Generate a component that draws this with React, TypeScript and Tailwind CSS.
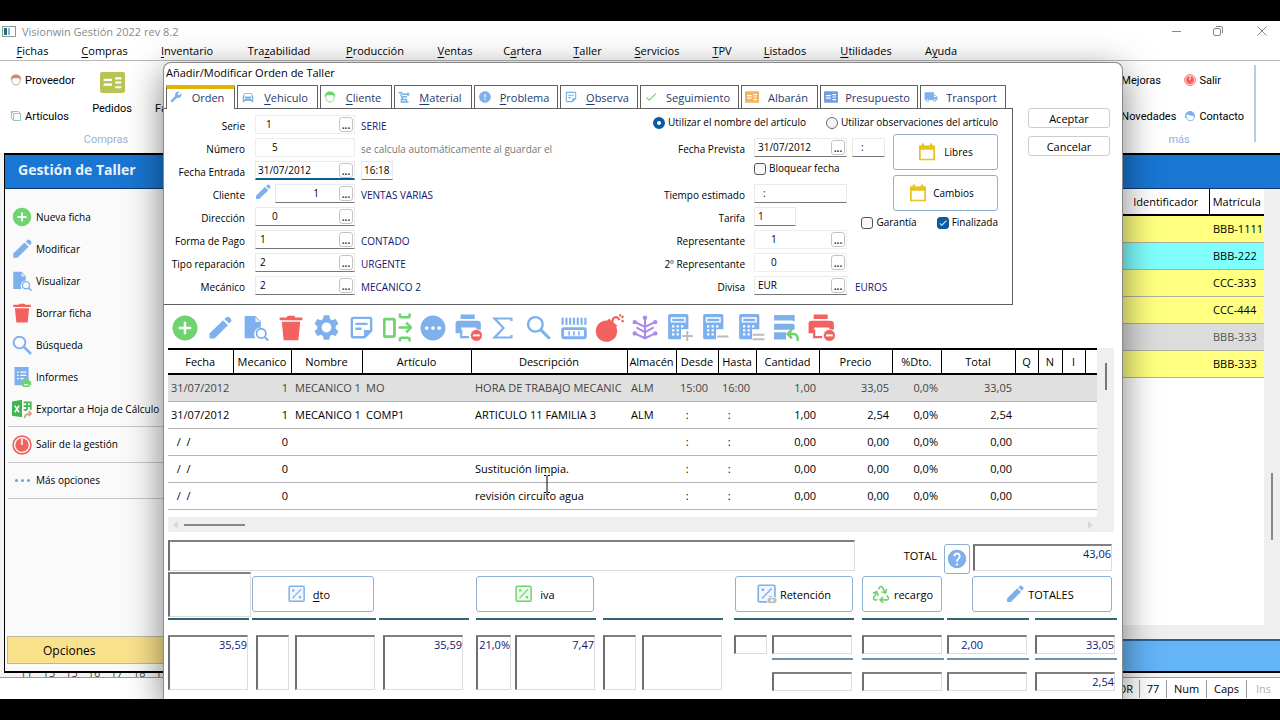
import type { ReactNode } from "react";
import clsx from "clsx";
import { Recycle } from "lucide-react";
import {
  MdAddCircle,
  MdCheck,
  MdDirectionsCar,
  MdError,
  MdHelp,
  MdLocalShipping,
  MdOutlineStickyNote2,
  MdPending,
  MdBuild,
} from "react-icons/md";

const BLUE = "#7fb0ee";
const GREEN = "#6fd36f";
const RED = "#f4625f";

/* ---------- icons ---------- */

interface IconProps {
  className?: string;
  color?: string;
}

function Svg({ className, children }: { className?: string; children: ReactNode }) {
  return (
    <svg viewBox="0 0 24 24" fill="none" className={clsx("shrink-0", className)} aria-hidden="true">
      {children}
    </svg>
  );
}

const Pencil = ({ className, color = BLUE }: IconProps) => (
  <Svg className={className}>
    <path fill={color} d="M1.500 17.500 15 4.300l5 5L6.500 22.500H1.500z" />
    <path fill={color} d="m16.500 3 1.600-1.500a2.600 2.600 0 0 1 3.500 0l1 1a2.600 2.600 0 0 1 0 3.500L21 7.600z" />
  </Svg>
);

const DocSearch = ({ className }: IconProps) => (
  <Svg className={className}>
    <path fill={BLUE} d="M1.500 1h10l5 5v5.500a6.300 6.300 0 0 0-5 10L1.500 21.500z" />
    <path fill="#fff" d="M11.500 2v4.500H16z" opacity=".8" />
    <circle cx="16.800" cy="17" r="4.300" stroke={BLUE} strokeWidth="1.700" />
    <path stroke={BLUE} strokeWidth="2" d="m20 20.300 3.300 3.300" />
  </Svg>
);

const Trash = ({ className }: IconProps) => (
  <Svg className={className}>
    <path fill={RED} d="M1.500 2.200h6.500l1-1.400h6l1 1.400h6.500v2.600h-21z" />
    <path fill={RED} d="M3.500 6.300h17l-1.700 17H5.200z" />
  </Svg>
);

const Lens = ({ className }: IconProps) => (
  <Svg className={className}>
    <circle cx="9" cy="9" r="7" stroke={BLUE} strokeWidth="2.300" />
    <path stroke={BLUE} strokeWidth="3" d="m14.300 14.300 8.500 8.500" />
  </Svg>
);

const Gear = ({ className }: IconProps) => (
  <Svg className={className}>
    <circle cx="12" cy="12" r="6.800" stroke={BLUE} strokeWidth="4.200" />
    {[0, 60, 120, 180, 240, 300].map((a) => (
      <path key={a} fill={BLUE} d="M8.500 4.500 9.300.300h5.400l.8 4.200z" transform={`rotate(${a} 12 12)`} />
    ))}
  </Svg>
);

const Power = ({ className }: IconProps) => (
  <Svg className={className}>
    <circle cx="12" cy="12" r="10.700" stroke={RED} strokeWidth="2" />
    <circle cx="12" cy="12" r="8" fill={RED} />
    <path stroke="#fff" strokeWidth="1.800" d="M12 4v8" />
  </Svg>
);

const Report = ({ className }: IconProps) => (
  <Svg className={className}>
    <path fill={BLUE} d="M3 0h17v17h-6v5H3z" />
    <path stroke="#fff" strokeWidth="1.500" d="M6 6h2m2 0h7M6 10h2m2 0h7M6 14h2m2 0h4" />
    <path fill={GREEN} d="M13 15h8v2h2v5h-2v2h-8v-2h-2v-5h2z" />
    <path fill="#fff" d="M14.500 20.500h5v1.500h-5z" />
  </Svg>
);

const Excel = ({ className }: IconProps) => (
  <Svg className={className}>
    <path fill="#3fb54f" d="M0 3 12 1v21L0 20z" />
    <path stroke="#fff" strokeWidth="1.900" d="m3.300 8 5.200 8m0-8-5.200 8" />
    <path stroke="#3fb54f" strokeWidth="2" d="M14 4h8.500v9M14 8.500h8M18 4v9M14 13h4" />
    <path stroke="#d9a08c" strokeWidth="1.900" d="M15 23c0-4 3-5.500 8-5.500M20 14.500l3 3-3 3" />
  </Svg>
);

const Transfer = ({ className }: IconProps) => (
  <Svg className={className}>
    <rect x="1" y="5" width="8.500" height="14.500" rx="1" stroke={GREEN} strokeWidth="2.300" />
    <path stroke={GREEN} strokeWidth="2.100" d="M13 12h10m-3.800-4 4 4-4 4M14 .500v1.700c0 1 .5 1.300 1.500 1.300h5c1 0 1.500-.3 1.500-1.300V.500M14 23.500v-1.700c0-1 .5-1.300 1.500-1.300h5c1 0 1.500.3 1.500 1.300v1.700" />
  </Svg>
);

const PrinterStop = ({ className, color = BLUE }: IconProps) => (
  <Svg className={className}>
    <path fill={color} d="M5 .500h12.500v4H5zM3 6h17a3 3 0 0 1 3 3v5h-3.500l-1-2H5.500v5H.500V8.500A2.500 2.500 0 0 1 3 6" />
    <path stroke={color} strokeWidth="2" d="M5.500 14v6.500h7" />
    <circle cx="19" cy="19" r="5.300" fill={RED} stroke="#fff" strokeWidth=".6" />
    <path stroke="#fff" strokeWidth="1.800" d="M16 19h6" />
  </Svg>
);

const Sigma = ({ className }: IconProps) => (
  <Svg className={className}>
    <path stroke={BLUE} strokeWidth="2.200" d="M20.500 5V2.500h-17l9 9.500-9 9.500h17V19" />
  </Svg>
);

const Barcode = ({ className }: IconProps) => (
  <Svg className={className}>
    <path stroke={BLUE} strokeWidth="2" d="M1.500 2.500v6.500M5 2.500v6.500M8.500 2.500v6.500M12 2.500v6.500M15.500 2.500v6.500M19 2.500v6.500M22.500 2.500v6.500" />
    <rect x="1.500" y="12.500" width="21" height="8.500" rx="1" stroke={BLUE} strokeWidth="2.600" />
    <path stroke={BLUE} strokeWidth="1.500" d="M7.500 15v4M12 15v4M16.500 15v4" />
  </Svg>
);

const Bomb = ({ className }: IconProps) => (
  <Svg className={className}>
    <circle cx="9.500" cy="15" r="8.800" fill={RED} />
    <path fill={RED} d="m11.500 4.500 7 6-3 3-6-6z" />
    <path stroke={RED} strokeWidth="1.700" d="M14.500 7.500c-.5-4 4.500-6 5.500-1.500M21 1l-.4 1.800M23.500 2.500 22 4M23.800 7l-2-.6" />
  </Svg>
);

const Branches = ({ className }: IconProps) => (
  <Svg className={className}>
    <path stroke="#a98ae8" strokeWidth="1.900" d="M12 2.500v19M2.500 6.500 12 11l9.500-4.500M2.500 17 12 21.500l9.500-4.500M4 11.500l8 4.500 8-4.500" />
    <g fill="#a98ae8">
      <circle cx="12" cy="2.500" r="2.100" />
      <circle cx="2.500" cy="6.500" r="2" />
      <circle cx="21.500" cy="6.500" r="2" />
      <circle cx="2.500" cy="17" r="2" />
      <circle cx="21.500" cy="17" r="2" />
    </g>
  </Svg>
);

const CALC_MARK = {
  plus: "M18 15v9M13.500 19.500h9.500",
  minus: "M13.500 20h10",
  equal: "M13 18.500h10.500M13 22.500h10.500",
};

const Calculator = ({ mark, className }: IconProps & { mark: keyof typeof CALC_MARK }) => (
  <Svg className={className}>
    <path fill={BLUE} d="M2.500 0h15A1.500 1.500 0 0 1 19 1.500v12h-6.500v9h-10A1.500 1.500 0 0 1 1 21V1.500A1.500 1.500 0 0 1 2.500 0" />
    <path stroke="#fff" strokeWidth="1.300" d="M4 3.500h12v3.500H4z" />
    <path stroke="#fff" strokeWidth="2" strokeDasharray="2 2" d="M4.500 11h12M4.500 14.500h7M4.500 18h7" />
    <path stroke="#b9bcc2" strokeWidth="1.800" d={CALC_MARK[mark]} />
  </Svg>
);

const RowsBack = ({ className }: IconProps) => (
  <Svg className={className}>
    <path fill={BLUE} d="M1 0h19v6l-2.500-1H1zM1 8h17l2 1v4.500H1zM1 16h11v6.500H1z" />
    <path stroke={GREEN} strokeWidth="2.300" d="M14 17.500h5c3 0 4 2 4 6.500M17.500 13.500l-4 4 4 4" />
  </Svg>
);

const Calendar = ({ className }: IconProps) => (
  <Svg className={className}>
    <path stroke="#e8c31c" strokeWidth="2.300" d="M2.500 4.500h19V22h-19z" />
    <path fill="#e8c31c" d="M2 3.500h20v5.500H2zM5 .500h3v4H5zM16 .500h3v4h-3z" />
  </Svg>
);

const Percent = ({ className, color = BLUE, eye }: IconProps & { eye?: boolean }) => (
  <Svg className={className}>
    <rect x="1.500" y="1.500" width="20" height="20" rx="1.500" stroke={color} strokeWidth="2" fill={color} fillOpacity=".1" />
    <path stroke={color} strokeWidth="1.800" d="M6 17.500 17.500 5.500" />
    <path fill={color} d="M5.500 5.500h3v3h-3zM14.500 14.500h3v3h-3z" />
    {eye && (
      <>
        <rect x="12" y="16" width="12" height="7.500" rx="3.700" fill="#bdbdbd" stroke="#fff" />
        <circle cx="18" cy="19.700" r="1.700" fill="#fff" />
      </>
    )}
  </Svg>
);

const Person = ({ className, color = "#c98b7c" }: IconProps) => (
  <Svg className={className}>
    <path stroke={color} strokeWidth="1.700" d="M3.500 10c0 8 3 12 8.500 12s8.500-4 8.500-12" />
    <path fill={color} d="M1.500 11C1.500 4 6 1 12 1s10.500 3 10.500 10c-2 0-3-1-4-2.500h-13C4.500 10 3.500 11 1.500 11" />
  </Svg>
);

const Boxes = ({ className }: IconProps) => (
  <Svg className={className}>
    <path stroke="#7cc3a4" strokeWidth="1.700" d="M7 7h14v14H7zM3 3h14l4 4M3 3v14l4 4M3 3l4 4" />
  </Svg>
);

const Card = ({ className, color = "#b9c553" }: IconProps) => (
  <Svg className={className}>
    <rect x="0" y="2" width="24" height="20" rx="2" fill={color} />
    <path stroke="#fff" strokeWidth="2" d="M3.500 9.500h8M3.500 14h8M14.500 8h6M14.500 12h6M14.500 16.500h6" />
  </Svg>
);

const Robot = ({ className }: IconProps) => (
  <Svg className={className}>
    <path stroke="#74b4e4" strokeWidth="2.800" d="M1 3.500h6l3 3h13M20 3v7M5 22h16M7 22v-5h10v5M10 17 5 6.500M9 11.500h9" />
  </Svg>
);

const Headset = ({ className }: IconProps) => (
  <Svg className={className}>
    <path fill={BLUE} d="M2 12a10 10 0 0 1 20 0v3h-3v-4c-5 1-10 0-12-3-1 2-2 3-2 4v4H2z" />
    <path stroke={BLUE} strokeWidth="1.800" d="M5 14c1 5 4 7.500 7.500 7.500 5 0 8-2.500 8-6.500" />
  </Svg>
);

/* ---------- small building blocks ---------- */

// "_" goes before the accelerator letter
function Accel({ text }: { text: string }) {
  const i = text.indexOf("_");
  if (i < 0) return <>{text}</>;
  return (
    <span>
      {text.slice(0, i)}
      <u className="underline-offset-2">{text[i + 1]}</u>
      {text.slice(i + 2)}
    </span>
  );
}

interface FieldProps {
  id: string;
  value: string;
  picker?: boolean;
  plain?: boolean;
  active?: boolean;
  className: string;
  inputClass?: string;
}

function Field({ id, value, picker, plain, active, className, inputClass = "pl-1" }: FieldProps) {
  return (
    <div
      className={clsx(
        "flex h-[19px] shrink-0 border bg-white",
        active
          ? "border-[#eaeaea] border-b-2 border-b-[#0a5f8f]"
          : plain
            ? "border-[#eeeeee]"
            : "border-[#eaeaea] border-b-[#777777]",
        className,
      )}
    >
      <input id={id} defaultValue={value} className={clsx("w-full min-w-0 bg-transparent outline-none", inputClass)} />
      {picker && (
        <button
          type="button"
          aria-label={`Buscar ${id}`}
          className="mt-px mr-px h-[15px] w-[14px] shrink-0 rounded-[3px] border border-[#c4c4c4] text-[10px] leading-[12px] font-bold text-[#333333]"
        >
          ...
        </button>
      )}
    </div>
  );
}

function Label({ id, children }: { id: string; children: ReactNode }) {
  return (
    <label htmlFor={id} className="text-right leading-[23px] whitespace-nowrap">
      {children}
    </label>
  );
}

function Check({ label, checked }: { label: string; checked?: boolean }) {
  return (
    <label className="flex items-center gap-[3px] whitespace-nowrap">
      <span className="grid h-3 w-3 shrink-0">
        <input
          type="checkbox"
          defaultChecked={checked}
          className="col-start-1 row-start-1 h-3 w-3 appearance-none rounded-[3px] border border-[#555555] bg-[#f7f7f7] checked:border-[#0a5aa5] checked:bg-[#0a5aa5]"
        />
        {checked && <MdCheck className="pointer-events-none col-start-1 row-start-1 h-3 w-3 p-px text-white" />}
      </span>
      {label}
    </label>
  );
}

function Choice({ label, checked }: { label: string; checked?: boolean }) {
  return (
    <label className="flex items-center gap-[3px] whitespace-nowrap">
      <input
        type="radio"
        name="texto"
        defaultChecked={checked}
        className="h-3 w-3 shrink-0 appearance-none rounded-full border border-[#666666] bg-[#f4f4f4] checked:border-4 checked:border-[#0a5aa5] checked:bg-white"
      />
      {label}
    </label>
  );
}

function BigButton({ className, children }: { className: string; children: ReactNode }) {
  return (
    <button
      type="button"
      className={clsx(
        "flex h-9 shrink-0 items-center justify-center rounded-[3px] border border-[#8fb0d2] bg-white",
        className,
      )}
    >
      {children}
    </button>
  );
}

const SUNKEN = "block border-t-2 border-l-2 border-r border-b border-t-[#808080] border-l-[#707070] border-r-[#dcdcdc] border-b-[#dcdcdc] bg-white outline-none";

function TallBox({ label, value = "", className }: { label: string; value?: string; className: string }) {
  return (
    <textarea
      aria-label={label}
      defaultValue={value}
      className={clsx(SUNKEN, "shrink-0 resize-none overflow-hidden text-right leading-4 whitespace-nowrap text-[#14146e]", className)}
    />
  );
}

function LowBox({ label, value = "", className }: { label: string; value?: string; className: string }) {
  return (
    <input
      aria-label={label}
      defaultValue={value}
      className={clsx(SUNKEN, "h-[19px] shrink-0 pb-[2px] text-right text-[#14146e]", className)}
    />
  );
}

/* ---------- data ---------- */

const MENU = [
  { text: "_Fichas", width: "w-[65px]" },
  { text: "_Compras", width: "w-[79px]" },
  { text: "_Inventario", width: "w-[86px]" },
  { text: "Tra_zabilidad", width: "w-[98px]" },
  { text: "_Producción", width: "w-[94px]" },
  { text: "_Ventas", width: "w-[66px]" },
  { text: "C_artera", width: "w-[69px]" },
  { text: "_Taller", width: "w-[61px]" },
  { text: "_Servicios", width: "w-[78px]" },
  { text: "_TPV", width: "w-[52px]" },
  { text: "_Listados", width: "w-[74px]" },
  { text: "_Utilidades", width: "w-[88px]" },
  { text: "A_yuda", width: "w-[62px]" },
];

const NAV = [
  { text: "Nueva ficha", icon: <MdAddCircle className="h-[22px] w-[22px]" color={GREEN} /> },
  { text: "Modificar", icon: <Pencil className="h-5 w-5" /> },
  { text: "Visualizar", icon: <DocSearch className="h-5 w-5" /> },
  { text: "Borrar ficha", icon: <Trash className="h-5 w-5" /> },
  { text: "Búsqueda", icon: <Lens className="h-5 w-5" /> },
  { text: "Informes", icon: <Report className="h-5 w-5" /> },
  { text: "Exportar a Hoja de Cálculo", icon: <Excel className="h-5 w-5" /> },
];

const RULER = ["11", "13", "15", "16", "17", "18", "19"];

const TABS = [
  { text: "Orden", width: "w-[69px]", icon: <MdBuild className="h-3 w-3 -scale-x-100" color={BLUE} /> },
  { text: "_Vehiculo", width: "w-[81px]", icon: <MdDirectionsCar className="h-[14px] w-[14px]" color="#7db8e6" /> },
  { text: "_Cliente", width: "w-[72px]", icon: <Person className="h-3 w-3" color={GREEN} /> },
  { text: "_Material", width: "w-[78px]", icon: <Robot className="h-3 w-3" /> },
  { text: "_Problema", width: "w-[84px]", icon: <MdError className="h-[14px] w-[14px]" color={BLUE} /> },
  { text: "_Observa", width: "w-[78px]", icon: <MdOutlineStickyNote2 className="h-[14px] w-[14px]" color={BLUE} /> },
  { text: "Se_guimiento", width: "w-[99px]", icon: <MdCheck className="h-[14px] w-[14px]" color={GREEN} /> },
  { text: "Albarán", width: "w-[77px]", icon: <Card className="h-[14px] w-[14px]" color="#f3b25c" /> },
  { text: "Presupuesto", width: "w-[98px]", icon: <Card className="h-[14px] w-[14px]" color="#6f9fe0" /> },
  { text: "Transport", width: "w-[86px]", icon: <MdLocalShipping className="h-[14px] w-[14px]" color={BLUE} /> },
];

const TOOLS = [
  { name: "Nueva línea", icon: <MdAddCircle className="h-[30px] w-[30px] shrink-0" color={GREEN} /> },
  { name: "Modificar línea", icon: <Pencil className="h-6 w-6" /> },
  { name: "Visualizar línea", icon: <DocSearch className="h-[26px] w-[26px]" /> },
  { name: "Borrar línea", icon: <Trash className="h-[26px] w-[26px]" /> },
  { name: "Ajustes", icon: <Gear className="h-[25px] w-[25px]" /> },
  { name: "Nota", icon: <MdOutlineStickyNote2 className="h-[29px] w-[29px] shrink-0" color={BLUE} /> },
  { name: "Traspasar", icon: <Transfer className="h-[29px] w-[29px]" /> },
  { name: "Más", icon: <MdPending className="h-[30px] w-[30px] shrink-0" color={BLUE} /> },
  { name: "Quitar impresión", icon: <PrinterStop className="h-[27px] w-[27px]" /> },
  { name: "Sumar", icon: <Sigma className="h-6 w-6" /> },
  { name: "Buscar", icon: <Lens className="h-[25px] w-[25px]" /> },
  { name: "Código de barras", icon: <Barcode className="h-[26px] w-[26px]" /> },
  { name: "Vaciar", icon: <Bomb className="h-[29px] w-[29px]" /> },
  { name: "Despiece", icon: <Branches className="h-[26px] w-[26px]" /> },
  { name: "Calculadora sumar", icon: <Calculator mark="plus" className="h-[27px] w-[27px]" /> },
  { name: "Calculadora restar", icon: <Calculator mark="minus" className="h-[27px] w-[27px]" /> },
  { name: "Calculadora igual", icon: <Calculator mark="equal" className="h-[27px] w-[27px]" /> },
  { name: "Recuperar", icon: <RowsBack className="h-[26px] w-[26px]" /> },
  { name: "Anular impresión", icon: <PrinterStop className="h-[27px] w-[27px]" color={RED} /> },
];

const COLUMNS = [
  { name: "Fecha", width: "w-[65px]", cell: "pl-[3px]" },
  { name: "Mecanico", width: "w-[58px]", cell: "pr-[3px] text-right" },
  { name: "Nombre", width: "w-[71px]", cell: "pl-1" },
  { name: "Artículo", width: "w-[109px]", cell: "pl-[4px]" },
  { name: "Descripción", width: "", cell: "pl-1" },
  { name: "Almacén", width: "w-[49px]", cell: "pl-1" },
  { name: "Desde", width: "w-[42px]", cell: "pl-1" },
  { name: "Hasta", width: "w-[38px]", cell: "pl-1" },
  { name: "Cantidad", width: "w-[63px]", cell: "pr-[3px] text-right" },
  { name: "Precio", width: "w-[73px]", cell: "pr-[3px] text-right" },
  { name: "%Dto.", width: "w-[49px]", cell: "pr-[3px] text-right" },
  { name: "Total", width: "w-[74px]", cell: "pr-[3px] text-right" },
  { name: "Q", width: "w-[23px]", cell: "" },
  { name: "N", width: "w-[24px]", cell: "" },
  { name: "I", width: "w-[23px]", cell: "" },
];

const LINES = [
  ["31/07/2012", "1", "MECANICO 1", "MO", "HORA DE TRABAJO MECANIC", "ALM", "15:00", "16:00", "1,00", "33,05", "0,0%", "33,05"],
  ["31/07/2012", "1", "MECANICO 1", "COMP1", "ARTICULO 11 FAMILIA 3", "ALM", "  :", "  :", "1,00", "2,54", "0,0%", "2,54"],
  ["  /  /", "0", "", "", "", "", "  :", "  :", "0,00", "0,00", "0,0%", "0,00"],
  ["  /  /", "0", "", "", "Sustitución limpia.", "", "  :", "  :", "0,00", "0,00", "0,0%", "0,00"],
  ["  /  /", "0", "", "", "revisión circuito agua", "", "  :", "  :", "0,00", "0,00", "0,0%", "0,00"],
];

const PLATES = [
  { plate: "BBB-1111", row: "bg-[#ffff80]" },
  { plate: "BBB-222", row: "bg-[#80ffff]" },
  { plate: "CCC-333", row: "bg-[#ffff80]" },
  { plate: "CCC-444", row: "bg-[#ffff80]" },
  { plate: "BBB-333", row: "bg-[#dcdcdc] text-[#555555]" },
  { plate: "BBB-333", row: "bg-[#ffff80]" },
];

const STATUS = [
  { text: "OR", cell: "w-[45px] pr-[6px] text-right" },
  { text: "77", cell: "w-[27px] text-center" },
  { text: "Num", cell: "w-[40px] text-center" },
  { text: "Caps", cell: "w-[40px] text-center" },
  { text: "Ins", cell: "w-[33px] text-center text-[#b0b0b0]" },
];

/* ---------- main window ---------- */

function Header() {
  return (
    <header className="bg-white">
      <div className="flex h-5 items-center gap-[6px] pl-[2px] text-[#8a8a8a]">
        <span className="flex h-[11px] w-[14px] gap-px border border-[#8a9a9a] bg-white p-px">
          <span className="flex-1 bg-[#1f6f78]" />
          <span className="flex-1 bg-[#8fb8c4]" />
          <span className="flex-1" />
        </span>
        <span>Visionwin Gestión 2022 rev 8.2</span>
        <div className="ml-auto flex items-center">
          <button type="button" aria-label="Minimizar" className="grid w-8 place-items-center">
            <span className="h-px w-[9px] bg-[#888888]" />
          </button>
          <button type="button" aria-label="Restaurar" className="grid w-[52px] place-items-center">
            <svg viewBox="0 0 10 10" fill="none" stroke="#888888" className="h-[10px] w-[10px]">
              <rect x=".5" y="2.500" width="7" height="7" rx="1.500" />
              <path d="M3 .5h5A1.500 1.500 0 0 1 9.500 2v5" />
            </svg>
          </button>
          <button type="button" aria-label="Cerrar" className="grid w-[36px] place-items-center">
            <svg viewBox="0 0 10 10" fill="none" stroke="#888888" className="h-[10px] w-[10px]">
              <path d="m.5.5 9 9m0-9-9 9" />
            </svg>
          </button>
        </div>
      </div>
      <nav className="flex h-5 items-center border-b border-[#b8b8b8]">
        {MENU.map((item) => (
          <button key={item.text} type="button" className={clsx("shrink-0 text-center", item.width)}>
            <Accel text={item.text} />
          </button>
        ))}
      </nav>
    </header>
  );
}

function Ribbon() {
  return (
    <div className="flex h-[92px] justify-between bg-white font-[Roboto,sans-serif]">
      <div className="flex pl-[10px]">
        <div className="flex w-[76px] flex-col gap-5 pt-[11px]">
          <button type="button" className="flex h-4 items-center gap-[3px]">
            <Person className="h-3 w-3" /> Proveedor
          </button>
          <button type="button" className="flex h-4 items-center gap-[3px]">
            <Boxes className="h-3 w-3" /> Artículos
          </button>
        </div>
        <div className="flex w-[52px] flex-col items-center pt-2">
          <button type="button" className="flex flex-col items-center gap-[5px]">
            <Card className="h-[27px] w-[25px]" /> Pedidos
          </button>
          <span className="-ml-3 mt-4 text-[#9db2cc]">Compras</span>
        </div>
        <button type="button" className="ml-[17px] self-start pt-10">Facturas</button>
      </div>
      <div className="mt-1 mr-6 flex h-[77px] items-start gap-4 border-r-2 border-[#b5cbe8] pr-[10px]">
        <div className="flex flex-col items-start gap-5 pt-[7px]">
          <button type="button" className="h-4">Mejoras</button>
          <button type="button" className="h-4">Novedades</button>
        </div>
        <div className="-ml-2 flex flex-col items-start pt-[7px]">
          <button type="button" className="flex h-4 items-center gap-[3px]">
            <Power className="h-3 w-3" /> Salir
          </button>
          <button type="button" className="mt-5 flex h-4 items-center gap-[3px]">
            <Headset className="h-3 w-3" /> Contacto
          </button>
          <span className="-ml-4 mt-2 text-[#8fb0e0]">más</span>
        </div>
      </div>
    </div>
  );
}

function Workspace() {
  return (
    <section className="ml-1 flex flex-1 flex-col border-y-2 border-l border-black bg-white">
      <h1 className="h-[34px] border-b border-[#0a3a70] bg-[#1976d2] pl-[13px] text-[14px] leading-[30px] font-bold text-[#e8f2ff]">
        Gestión de Taller
      </h1>
      <div className="flex flex-1">
        <aside className="flex w-[190px] shrink-0 flex-col bg-[#fafafa] px-[3px] pt-3 pb-[7px] text-[10px]">
          {NAV.map((item) => (
            <button key={item.text} type="button" className="flex h-8 shrink-0 items-center gap-[3px] pl-[3px] whitespace-nowrap">
              <span className="grid w-[22px] place-items-center">{item.icon}</span>
              {item.text}
            </button>
          ))}
          <button type="button" className="mt-px flex h-[37px] shrink-0 items-center gap-[3px] border-t border-b border-[#c8c8c8] pl-[3px]">
            <Power className="h-5 w-[22px]" />
            Salir de la gestión
          </button>
          <button type="button" className="flex h-9 shrink-0 items-center gap-[3px] border-b border-[#c8c8c8] pl-[3px]">
            <span className="flex w-[22px] justify-center gap-[3px]">
              <span className="h-[3px] w-[3px] rounded-full bg-[#6f9fe0]" />
              <span className="h-[3px] w-[3px] rounded-full bg-[#6f9fe0]" />
              <span className="h-[3px] w-[3px] rounded-full bg-[#6f9fe0]" />
            </span>
            Más opciones
          </button>
          <button type="button" className="mt-auto -ml-px h-7 border border-[#b9b9a0] bg-[#fae28c] pl-[35px] text-left text-[12px]">
            Opciones
          </button>
        </aside>
        <div className="flex flex-1 flex-col">
          <div className="flex flex-1 bg-white">
            <div className="flex-1">
              <table className="w-full table-fixed border-collapse">
                <thead>
                  <tr className="h-[26px] border-b-2 border-black">
                    <th aria-label="Titular" />
                    <th className="w-[86px] border-r border-black font-normal">Identificador</th>
                    <th className="w-[55px] font-normal">Matrícula</th>
                  </tr>
                </thead>
                <tbody>
                  {PLATES.map((p, i) => (
                    <tr key={i} className={clsx("h-[27px] border-b border-[#b0b0a0]", p.row)}>
                      <td />
                      <td />
                      <td className="pl-1 whitespace-nowrap">{p.plate}</td>
                    </tr>
                  ))}
                </tbody>
              </table>
            </div>
            <div className="flex w-4 flex-col items-center bg-[#efefef] pt-[284px]">
              <span className="h-[67px] w-[2px] bg-[#888888]" />
            </div>
          </div>
          <div className="h-[14px] bg-[#efefef]" />
          <div className="h-8 border-t-2 border-[#2c5f94] bg-[#64b4f8]" />
        </div>
      </div>
    </section>
  );
}

/* ---------- order dialog ---------- */

function OrderForm() {
  return (
    <div className="flex h-[197px] border border-l-0 border-[#606060] bg-white pt-[6px] pr-[14px] text-[10px]">
      <div className="grid w-[481px] shrink-0 grid-cols-[81px_104px_1fr] content-start gap-x-[6px] [grid-auto-rows:23px]">
        <Label id="serie">Serie</Label>
        <Field id="serie" value="1" picker plain className="ml-1" inputClass="pl-[10px]" />
        <span className="leading-[23px] text-[#14146e]">SERIE</span>

        <Label id="numero">Número</Label>
        <Field id="numero" value="5" plain className="ml-1" inputClass="pl-4" />
        <span className="leading-[23px] text-[#777777]">se calcula automáticamente al guardar el</span>

        <Label id="entrada">Fecha Entrada</Label>
        <Field id="entrada" value="31/07/2012" picker active className="ml-1" inputClass="pl-[2px]" />
        <Field id="hora" value="16:18" className="w-8" inputClass="pl-[2px]" />

        <Label id="cliente">Cliente</Label>
        <div className="flex gap-1 pl-1">
          <Pencil className="h-4 w-4" />
          <Field id="cliente" value="1" picker className="w-20" inputClass="pr-5 text-right" />
        </div>
        <span className="leading-[23px] text-[#14146e]">VENTAS VARIAS</span>

        <Label id="direccion">Dirección</Label>
        <Field id="direccion" value="0" picker className="ml-1" inputClass="pl-4" />
        <span />

        <Label id="pago">Forma de Pago</Label>
        <Field id="pago" value="1" picker className="ml-1" />
        <span className="leading-[23px] text-[#14146e]">CONTADO</span>

        <Label id="reparacion">Tipo reparación</Label>
        <Field id="reparacion" value="2" picker className="ml-1" />
        <span className="leading-[23px] text-[#14146e]">URGENTE</span>

        <Label id="mecanico">Mecánico</Label>
        <Field id="mecanico" value="2" picker className="ml-1" />
        <span className="leading-[23px] text-[#14146e]">MECANICO 2</span>
      </div>

      <div className="grid min-w-0 flex-1 grid-cols-[100px_minmax(0,1fr)_105px] content-start gap-x-[9px] [grid-auto-rows:23px]">
        <div className="col-span-3 flex items-start justify-between pl-2">
          <Choice label="Utilizar el nombre del artículo" checked />
          <Choice label="Utilizar observaciones del artículo" />
        </div>

        <Label id="prevista">Fecha Prevista</Label>
        <div className="flex gap-[5px]">
          <Field id="prevista" value="31/07/2012" picker className="w-[93px]" inputClass="pl-[3px]" />
          <Field id="horaPrevista" value=":" className="w-[33px]" inputClass="pl-2" />
        </div>
        <div className="col-start-3 row-span-3 -my-1 flex flex-col gap-[5px]">
          <BigButton className="w-full gap-2">
            <Calendar className="h-[18px] w-[18px]" /> Libres
          </BigButton>
          <BigButton className="w-full gap-[6px] pr-2">
            <Calendar className="h-[18px] w-[18px]" /> Cambios
          </BigButton>
        </div>

        <div className="col-start-2 flex items-start">
          <Check label="Bloquear fecha" />
        </div>

        <Label id="tiempo">Tiempo estimado</Label>
        <Field id="tiempo" value=":" className="w-[93px]" inputClass="pl-2" />

        <Label id="tarifa">Tarifa</Label>
        <div className="col-span-2 flex items-start justify-between">
          <Field id="tarifa" value="1" className="w-[42px]" inputClass="pl-[3px]" />
          <div className="flex gap-5 pt-2">
            <Check label="Garantía" />
            <Check label="Finalizada" checked />
          </div>
        </div>

        <Label id="representante">Representante</Label>
        <Field id="representante" value="1" picker plain className="w-[93px]" inputClass="pl-4" />
        <span />

        <Label id="representante2">2º Representante</Label>
        <Field id="representante2" value="0" picker plain className="w-[93px]" inputClass="pl-4" />
        <span />

        <Label id="divisa">Divisa</Label>
        <div className="flex gap-2">
          <Field id="divisa" value="EUR" picker className="w-[93px]" inputClass="pl-[3px]" />
          <span className="leading-[23px] text-[#14146e]">EUROS</span>
        </div>
      </div>
    </div>
  );
}

function LinesTable() {
  return (
    <div className="mr-2 ml-1 bg-[#efefef]">
      <div className="flex">
        <div className="h-[169px] flex-1 bg-white">
          <table className="w-full table-fixed border-collapse">
            <thead>
              <tr className="h-[25px] border-y-2 border-black">
                {COLUMNS.map((c) => (
                  <th key={c.name} className={clsx("overflow-hidden border-r border-black p-0 text-center font-normal whitespace-nowrap", c.width)}>
                    {c.name}
                  </th>
                ))}
                <th className="w-3" aria-label="Fin" />
              </tr>
            </thead>
            <tbody>
              {LINES.map((line, r) => (
                <tr key={r} className={clsx("h-[27px] border-b border-[#b4b4b4]", r === 0 && "bg-[#e0e0e0] text-[#444444]")}>
                  {COLUMNS.map((c, i) => (
                    <td key={c.name} className={clsx("py-0", c.cell)}>
                      <div className="whitespace-pre">{line[i]}</div>
                    </td>
                  ))}
                  <td />
                </tr>
              ))}
            </tbody>
          </table>
        </div>
        <div className="flex w-[17px] flex-col items-center pt-[15px]">
          <span className="h-[27px] w-[2px] bg-[#777777]" />
        </div>
      </div>
      <div className="flex h-[15px] items-center gap-[6px] px-[5px]">
        <span className="border-y-4 border-r-[5px] border-y-transparent border-r-[#d8d8d8]" />
        <span className="h-[2px] w-[61px] bg-[#888888]" />
        <span className="mr-4 ml-auto border-y-4 border-l-[5px] border-y-transparent border-l-[#d8d8d8]" />
      </div>
    </div>
  );
}

function Totals() {
  return (
    <div className="flex flex-col pr-[5px] pl-1">
      <div className="mt-2 flex h-8 items-start">
        <input aria-label="Observación" className={clsx(SUNKEN, "h-[31px] min-w-0 flex-1")} />
        <label htmlFor="total" className="w-[82px] text-right leading-[31px]">TOTAL</label>
        <button type="button" aria-label="Ayuda" className="mt-1 ml-[7px] grid h-[30px] w-[26px] place-items-center rounded-[3px] border border-[#8fb0d2]">
          <MdHelp className="h-[22px] w-[22px]" color={BLUE} />
        </button>
        <input
          id="total"
          defaultValue="43,06"
          className={clsx(SUNKEN, "mt-1 mr-[5px] ml-[3px] h-[27px] w-[139px] pb-[10px] text-right text-[#14146e]")}
        />
      </div>
      <div className="flex h-[46px] items-start">
        <TallBox label="Código" className="h-[45px] w-[83px]" />
        <BigButton className="mt-1 ml-px w-[122px] gap-[7px] pr-2">
          <Percent className="h-[18px] w-[18px]" /> <Accel text="_dto" />
        </BigButton>
        <BigButton className="mt-1 ml-[102px] w-[118px] gap-[7px]">
          <Percent className="h-[18px] w-[18px]" color={GREEN} /> iva
        </BigButton>
        <BigButton className="mt-1 ml-auto w-[118px] gap-[3px]">
          <Percent className="h-5 w-5" eye /> Retención
        </BigButton>
        <BigButton className="mt-1 ml-[9px] w-[80px] gap-[3px]">
          <Recycle className="h-5 w-5" color={GREEN} /> recargo
        </BigButton>
        <BigButton className="mt-1 mr-[5px] ml-[30px] w-[140px] gap-1 pr-1">
          <Pencil className="h-[18px] w-[18px]" /> TOTALES
        </BigButton>
      </div>
      <div className="flex [&>div]:shrink-0 [&>div]:border-t-2 [&>div]:border-[#2f6470] [&>div]:pt-[15px]">
        <div className="w-[81px]">
          <TallBox label="Base" value="35,59" className="h-[55px] w-[80px]" />
        </div>
        <div className="ml-[3px] flex w-[124px] gap-[6px] pl-1">
          <TallBox label="Dto. %" className="h-[55px] w-[33px]" />
          <TallBox label="Dto." className="h-[55px] w-[80px]" />
        </div>
        <div className="ml-[3px] w-[90px] pl-1">
          <TallBox label="Base imponible" value="35,59" className="h-[55px] w-[80px]" />
        </div>
        <div className="ml-[7px] flex w-[120px] gap-1">
          <TallBox label="IVA %" value="21,0%" className="h-[55px] w-[35px]" />
          <TallBox label="IVA" value="7,47" className="h-[55px] w-[80px]" />
        </div>
        <div className="ml-[7px] flex w-[120px] gap-[6px]">
          <TallBox label="Recargo %" className="h-[55px] w-[33px]" />
          <TallBox label="Recargo" className="h-[55px] w-[80px]" />
        </div>
        <div className="ml-auto flex w-[120px] gap-[5px]">
          <LowBox label="Retención %" className="w-[33px]" />
          <div>
            <LowBox label="Retención" className="w-[80px]" />
            <div className="mt-1 mb-3 h-[2px] w-[81px] bg-[#6d93b3]" />
            <LowBox label="Retención 2" className="w-[80px]" />
          </div>
        </div>
        <div className="ml-2 w-[82px]">
          <LowBox label="Suplido" className="w-[80px]" />
          <div className="mt-1 mb-3 h-[2px] bg-[#6d93b3]" />
          <LowBox label="Suplido 2" className="w-[80px]" />
        </div>
        <div className="ml-[3px] w-[82px]">
          <LowBox label="Horas" value="2,00" className="w-[80px] pr-[43px]" />
          <div className="mt-1 mb-3 h-[2px] bg-[#6d93b3]" />
          <LowBox label="Horas 2" className="w-[80px]" />
        </div>
        <div className="ml-[6px] w-[82px]">
          <LowBox label="Mano de obra" value="33,05" className="w-[80px]" />
          <div className="mt-1 mb-3 h-[2px] bg-[#6d93b3]" />
          <LowBox label="Material" value="2,54" className="w-[80px]" />
        </div>
      </div>
    </div>
  );
}

function OrderDialog() {
  return (
    <div
      role="dialog"
      aria-label="Añadir/Modificar Orden de Taller"
      className="absolute top-[41px] right-[157px] bottom-0 left-[163px] rounded-t-lg border-x border-t border-[#8a8a8a] bg-white shadow-[0_10px_36px_rgba(0,0,0,0.5)]"
    >
      <h2 className="h-[22px] pl-[2px] leading-[19px]">Añadir/Modificar Orden de Taller</h2>
      <div className="flex">
        <div className="flex min-w-0 flex-1 flex-col">
          <div role="tablist" className="-mb-px flex h-[24px] items-end gap-[2px] pl-[2px]">
            {TABS.map((tab, i) => (
              <button
                key={tab.text}
                type="button"
                role="tab"
                aria-selected={i === 0}
                className={clsx(
                  "relative flex h-full shrink-0 items-center border border-[#606060] bg-white pl-[3px] text-[#1d3a70]",
                  i === 0 ? "border-t-4 border-b-0 border-t-[#e0b400] pb-1" : "border-b-[#606060]",
                  tab.width,
                )}
              >
                {tab.icon}
                <span className="flex-1 text-center">
                  <Accel text={tab.text} />
                </span>
              </button>
            ))}
          </div>
          <OrderForm />
        </div>
        <div className="mr-3 ml-[15px] flex w-[82px] shrink-0 flex-col gap-2 pt-[23px]">
          <button type="button" className="h-5 rounded-[3px] border border-[#cccccc] bg-white">Aceptar</button>
          <button type="button" className="h-5 rounded-[3px] border border-[#cccccc] bg-white">Cancelar</button>
        </div>
      </div>
      <div className="flex h-[43px] w-[672px] items-center justify-between pt-[2px] pl-[7px]">
        {TOOLS.map((tool) => (
          <button key={tool.name} type="button" aria-label={tool.name} className="flex w-[28px] shrink-0 items-center justify-center">
            {tool.icon}
          </button>
        ))}
      </div>
      <LinesTable />
      <Totals />
      {/* text pointer resting on the lines table */}
      <svg viewBox="0 0 8 18" fill="none" stroke="#000" className="absolute top-[412px] left-[379px] h-[18px] w-2">
        <path d="M1 .5h2l1 1 1-1h2M4 1.500v15M1 17.500h2l1-1 1 1h2" />
      </svg>
    </div>
  );
}

export default function App() {
  return (
    <div className="flex min-h-screen flex-col bg-black py-[21px] font-['Open_Sans',sans-serif] text-[11px] leading-[15px] text-black">
      <div className="relative flex flex-1 flex-col overflow-hidden bg-[#f4f4f4]">
        <Header />
        <Ribbon />
        <Workspace />
        <div className="flex h-1 items-end gap-[10px] overflow-hidden pl-5 text-[#444444]">
          {RULER.map((n) => (
            <span key={n} className="leading-[9px]">{n}</span>
          ))}
        </div>
        <footer className="flex h-[22px] items-center justify-end border-t border-[#999999] bg-white">
          {STATUS.map((s, i) => (
            <span key={s.text} className={clsx("h-[18px] leading-[17px]", i < 4 && "border-r border-[#999999]", s.cell)}>
              {s.text}
            </span>
          ))}
        </footer>
        <OrderDialog />
      </div>
    </div>
  );
}
